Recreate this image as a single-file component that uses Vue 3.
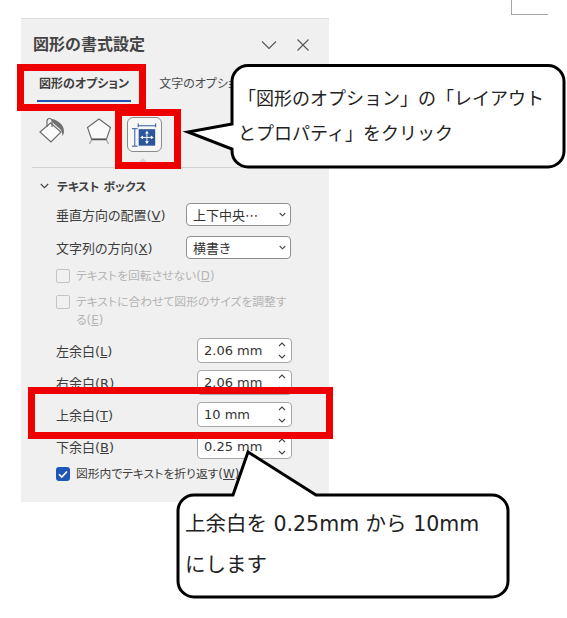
<script setup>
const selects = [
  { label: '垂直方向の配置', key: 'V', value: '上下中央⋯' },
  { label: '文字列の方向', key: 'X', value: '横書き' },
]
const margins = [
  { label: '左余白', key: 'L', value: '2.06 mm' },
  { label: '右余白', key: 'R', value: '2.06 mm' },
  { label: '上余白', key: 'T', value: '10 mm' },
  { label: '下余白', key: 'B', value: '0.25 mm' },
]
const marks = [
  { x: 17, y: 64, w: 129, h: 47 },
  { x: 115, y: 109, w: 66, h: 60 },
  { x: 28, y: 387, w: 305, h: 52 },
]
</script>

<template>
  <div class="page">
    <div class="corner"></div>

    <section class="panel">
      <header class="head">
        <h1>図形の書式設定</h1>
        <svg class="head-icon chev" width="16" height="10" viewBox="0 0 16 10"><path d="M1 1.5 8 8.5 15 1.5" /></svg>
        <svg class="head-icon" width="12" height="12" viewBox="0 0 12 12"><path d="M.5.5 11.5 11.5M11.5.5.5 11.5" /></svg>
      </header>

      <nav class="tabs">
        <span class="tab active">図形のオプション</span>
        <span class="tab">文字のオプション</span>
      </nav>

      <div class="icons">
        <svg class="ico" width="26" height="28" viewBox="0 0 26 28">
          <path class="line" fill="#fafafa" d="M1 15 11.500 6 22 15 12 25Z" />
          <path class="line" fill="none" d="M8 10V4a2.500 2.500 0 0 1 5 0v6" />
          <path fill="#707070" d="M13 2c6 1 12 6 12 12 0 2-.6 4-1.500 5-.3-3-.5-5-2.500-7L13 5Z" />
        </svg>
        <svg class="ico ico-pent" width="26" height="28" viewBox="0 0 26 28">
          <path class="line" fill="#fafafa" d="M13 2 24.500 10.500 20.500 22H5.500L1.500 10.500Z" />
          <path fill="none" stroke="#a5a5a5" stroke-width="1.300" d="M5.500 23 3.500 27M20.500 23 22.500 27" />
          <path fill="none" stroke="#555" stroke-width="1.500" d="M5.500 22.500H20.500" />
        </svg>
        <button class="icon-btn">
          <svg width="34" height="34" viewBox="0 0 34 34">
            <path fill="none" stroke="#2b579a" stroke-width="1" d="M10.500 5V9M28.500 5V9M10.500 7.500H28.500M4 10.500H10M4 28.500H10M7 10.500V28.500" />
            <rect x="11" y="11" width="17" height="17" fill="#2b579a" />
            <path fill="none" stroke="#fff" stroke-width="1" d="M19.500 14V25M14 19.500H25" />
            <path fill="#fff" d="M19.500 12.500 21.500 15.500H17.500ZM19.500 26.500 17.500 23.500H21.500ZM12.500 19.500 15.500 17.500V21.500ZM26.500 19.500 23.500 21.500V17.500Z" />
          </svg>
        </button>
      </div>
      <div class="caret"></div>
      <div class="rule"></div>

      <div class="group">
        <svg class="group-chev" width="9" height="6" viewBox="0 0 9 6"><path d="M.8 1 4.500 4.700 8.200 1" /></svg>
        テキスト ボックス
      </div>

      <div v-for="s in selects" :key="s.key" class="row row-select">
        <label>{{ s.label }}(<u>{{ s.key }}</u>)</label>
        <div class="select">
          <span>{{ s.value }}</span>
          <svg width="7" height="5" viewBox="0 0 7 5"><path d="M.7 1 3.500 3.800 6.300 1" /></svg>
        </div>
      </div>

      <div class="check off first">
        <i class="box"></i>
        <span>テキストを回転させない(<u>D</u>)</span>
      </div>
      <div class="check off second">
        <i class="box"></i>
        <span>テキストに合わせて図形のサイズを調整す<br />る(<u>E</u>)</span>
      </div>

      <div class="margins">
        <div v-for="m in margins" :key="m.key" class="row row-spin">
          <label>{{ m.label }}(<u>{{ m.key }}</u>)</label>
          <div class="spin">
            <span>{{ m.value }}</span>
            <svg width="8" height="17" viewBox="0 0 8 17"><path d="M1 4 4 1 7 4M1 13 4 16 7 13" /></svg>
          </div>
        </div>
      </div>

      <div class="check on">
        <i class="box">
          <svg width="14" height="14" viewBox="0 0 14 14"><path d="M3 7.200 5.800 10 11 4.500" /></svg>
        </i>
        <span>図形内でテキストを折り返す(<u>W</u>)</span>
      </div>
    </section>

    <!-- annotations drawn on top of the screenshot -->
    <div
      v-for="(m, i) in marks"
      :key="i"
      class="mark"
      :style="{ left: m.x + 'px', top: m.y + 'px', width: m.w + 'px', height: m.h + 'px' }"
    ></div>

    <svg class="bubbles" width="567" height="618" viewBox="0 0 567 618">
      <path d="M248 65.500H548a16 16 0 0 1 16 16V151a16 16 0 0 1-16 16H248a16 16 0 0 1-16-16V149L188 132 232 124V81.500a16 16 0 0 1 16-16Z" />
      <path d="M194 495H233L248 452 316 495H492a16 16 0 0 1 16 16V581a16 16 0 0 1-16 16H194a16 16 0 0 1-16-16V511a16 16 0 0 1 16-16Z" />
    </svg>
    <p class="note note-a">「図形のオプション」の「レイアウト<br />とプロパティ」をクリック</p>
    <p class="note note-b">上余白を 0.25mm から 10mm<br />にします</p>
  </div>
</template>

<style scoped>
.page {
  position: relative;
  width: 567px;
  height: 618px;
  overflow: hidden;
  background: #fff;
  padding: 18px 0 0 21px;
  box-sizing: border-box;
  font-family: "DejaVu Sans", "Noto Sans CJK JP", sans-serif;
}

.corner {
  position: absolute;
  left: 511px;
  top: -2px;
  width: 36px;
  height: 16px;
  border-left: 1px solid #a6a6a6;
  border-bottom: 1px solid #a6a6a6;
}

.panel {
  width: 308px;
  height: 484px;
  box-sizing: border-box;
  background: #f0f0f0;
  border-top: 1px solid #ddd;
  color: #3d3d3d;
  font-feature-settings: "palt";
}

.head {
  height: 49px;
  display: flex;
  align-items: center;
  padding: 2px 20px 0 12px;
  box-sizing: border-box;
}
.head h1 {
  margin: 0 auto 0 0;
  font-size: 16px;
  line-height: 47px;
  font-weight: 700;
  color: #444;
  font-feature-settings: normal;
}
.head-icon path {
  fill: none;
  stroke: #555;
  stroke-width: 1.1;
}
.chev {
  margin-right: 20px;
}

.tabs {
  height: 34px;
  display: flex;
  gap: 26px;
  padding-left: 16px;
}
.tab {
  font-size: 12px;
  line-height: 33px;
  height: 34px;
  padding: 0 2px;
  box-sizing: border-box;
  white-space: nowrap;
  color: #4a4a4a;
}
.tab.active {
  font-weight: 700;
  color: #3d3d3d;
  border-bottom: 2px solid #2152b3;
}

.icons {
  height: 50px;
  display: flex;
  align-items: flex-start;
  padding: 15px 0 0 18px;
  box-sizing: border-box;
}
.ico {
  margin-right: 21px;
}
.ico-pent {
  margin-right: 15px;
}
.line {
  stroke: #666;
  stroke-width: 1.100;
}
.icon-btn {
  width: 35px;
  height: 35px;
  padding: 0;
  display: flex;
  align-items: center;
  justify-content: center;
  background: #f7f7f7;
  border: 1px solid #8a8a8a;
  border-radius: 6px;
  box-sizing: border-box;
}
.caret {
  width: 0;
  height: 0;
  margin: 6px 0 0 117px;
  border: 5px solid transparent;
  border-top: 0;
  border-bottom-color: #d6d6d6;
}
.rule {
  height: 1px;
  margin: 4px 0 0 11px;
  width: 297px;
  background: #d2d2d2;
}

.group {
  height: 35px;
  display: flex;
  align-items: center;
  padding-left: 19px;
  font-size: 11.800px;
  font-weight: 700;
  color: #404040;
}
.group-chev {
  margin-right: 8px;
}
.group-chev path,
.select path,
.spin path {
  fill: none;
  stroke: #444;
  stroke-width: 1.100;
}

.row {
  display: flex;
  align-items: center;
  font-size: 13px;
  padding-left: 35px;
}
.row label {
  flex: none;
  white-space: nowrap;
}
.row-select {
  height: 23px;
  margin-bottom: 10px;
}
.row-select label {
  width: 130px;
}
.select {
  width: 105px;
  height: 23px;
  box-sizing: border-box;
  display: flex;
  align-items: center;
  justify-content: space-between;
  padding: 0 4px 0 6px;
  background: #fff;
  border: 1px solid #8f8f8f;
  border-radius: 4px;
  color: #333;
}

.check {
  display: flex;
  gap: 6px;
  margin-left: 35px;
  font-size: 11.800px;
  line-height: 18px;
  white-space: nowrap;
}
.check.off {
  color: #b4b4b4;
}
.check.first {
  margin-top: -2px;
  height: 18px;
}
.check.second {
  margin-top: 8px;
  height: 36px;
}
.box {
  flex: none;
  width: 14px;
  height: 14px;
  margin-top: 2px;
  box-sizing: border-box;
  border: 1px solid #c4c4c4;
  border-radius: 2px;
}
.check.on {
  margin-top: -1px;
  color: #404040;
}
.check.on .box {
  background: #1f57b8;
  border: 0;
  border-radius: 3px;
}
.check.on .box svg {
  display: block;
}
.check.on .box path {
  fill: none;
  stroke: #fff;
  stroke-width: 1.600;
}

.margins {
  margin-top: 9px;
}
.row-spin {
  height: 25px;
  margin-bottom: 7px;
}
.row-spin label {
  width: 141px;
}
.spin {
  width: 95px;
  height: 25px;
  box-sizing: border-box;
  display: flex;
  align-items: center;
  justify-content: space-between;
  padding: 0 5px 0 6px;
  background: #fff;
  border: 1px solid #a8a8a8;
  border-radius: 4px;
  color: #333;
}

.mark {
  position: absolute;
  box-sizing: border-box;
  border: 7px solid #ee0000;
}

.bubbles {
  position: absolute;
  left: 0;
  top: 0;
}
.bubbles path {
  fill: #fff;
  stroke: #000;
  stroke-width: 3;
  stroke-linejoin: miter;
}

.note {
  position: absolute;
  margin: 0;
  white-space: nowrap;
  color: #222;
}
.note-a {
  left: 238px;
  top: 81px;
  font-size: 18px;
  line-height: 35px;
}
.note-b {
  left: 185px;
  top: 504px;
  font-size: 20.500px;
  line-height: 41px;
}
</style>
